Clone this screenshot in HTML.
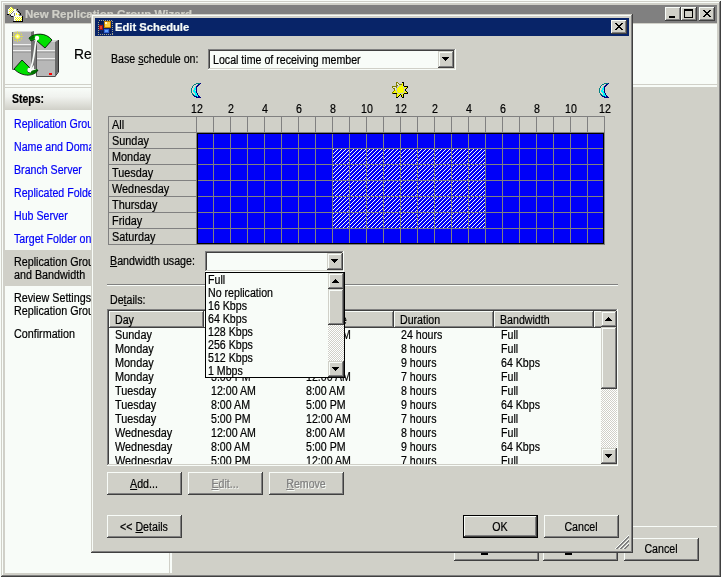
<!DOCTYPE html><html><head><meta charset="utf-8"><title>Edit Schedule</title><style>
html,body{margin:0;padding:0}body{width:721px;height:577px;position:relative;overflow:hidden;background:#F8FCF8;font-family:"Liberation Sans",sans-serif}
#r{position:absolute;left:0;top:0;width:721px;height:577px;overflow:hidden}
#r div,#r span.t,#r svg{position:absolute}
#r div{overflow:hidden}
span.t{white-space:nowrap;display:block;-webkit-text-stroke:0.22px currentColor}
u{text-decoration:underline;text-underline-offset:1px;text-decoration-thickness:1px}
</style></head><body><div id="r">
<div style="left:1px;top:1px;width:720px;height:576px;background:#D0D0C8;"></div>
<div style="left:1px;top:1px;width:720px;height:1px;background:#D0D0C8;"></div>
<div style="left:1px;top:1px;width:1px;height:576px;background:#D0D0C8;"></div>
<div style="left:1px;top:576px;width:720px;height:1px;background:#404040;"></div>
<div style="left:720px;top:1px;width:1px;height:576px;background:#404040;"></div>
<div style="left:2px;top:2px;width:718px;height:1px;background:#F8FCF8;"></div>
<div style="left:2px;top:2px;width:1px;height:574px;background:#F8FCF8;"></div>
<div style="left:2px;top:575px;width:718px;height:1px;background:#808080;"></div>
<div style="left:719px;top:2px;width:1px;height:574px;background:#808080;"></div>
<div style="left:5px;top:5px;width:712px;height:18px;background:#808080;"></div>
<span class="t" style="top:7.19px;font-size:11px;line-height:14px;color:#D0D0C8;transform:scaleX(1.044);font-weight:bold;left:25px;transform-origin:0 0;">New Replication Group Wizard</span>
<div style="left:665px;top:7px;width:16px;height:14px;background:#D0D0C8;"></div>
<div style="left:665px;top:7px;width:16px;height:1px;background:#F8FCF8;"></div>
<div style="left:665px;top:7px;width:1px;height:14px;background:#F8FCF8;"></div>
<div style="left:665px;top:20px;width:16px;height:1px;background:#404040;"></div>
<div style="left:680px;top:7px;width:1px;height:14px;background:#404040;"></div>
<div style="left:666px;top:8px;width:14px;height:1px;background:#D0D0C8;"></div>
<div style="left:666px;top:8px;width:1px;height:12px;background:#D0D0C8;"></div>
<div style="left:666px;top:19px;width:14px;height:1px;background:#808080;"></div>
<div style="left:679px;top:8px;width:1px;height:12px;background:#808080;"></div>
<div style="left:669px;top:16px;width:6px;height:2px;background:#000;"></div>
<div style="left:681px;top:7px;width:16px;height:14px;background:#D0D0C8;"></div>
<div style="left:681px;top:7px;width:16px;height:1px;background:#F8FCF8;"></div>
<div style="left:681px;top:7px;width:1px;height:14px;background:#F8FCF8;"></div>
<div style="left:681px;top:20px;width:16px;height:1px;background:#404040;"></div>
<div style="left:696px;top:7px;width:1px;height:14px;background:#404040;"></div>
<div style="left:682px;top:8px;width:14px;height:1px;background:#D0D0C8;"></div>
<div style="left:682px;top:8px;width:1px;height:12px;background:#D0D0C8;"></div>
<div style="left:682px;top:19px;width:14px;height:1px;background:#808080;"></div>
<div style="left:695px;top:8px;width:1px;height:12px;background:#808080;"></div>
<div style="left:684px;top:9px;width:9px;height:9px;background:#000;"></div>
<div style="left:685px;top:11px;width:7px;height:6px;background:#D0D0C8;"></div>
<div style="left:699px;top:7px;width:16px;height:14px;background:#D0D0C8;"></div>
<div style="left:699px;top:7px;width:16px;height:1px;background:#F8FCF8;"></div>
<div style="left:699px;top:7px;width:1px;height:14px;background:#F8FCF8;"></div>
<div style="left:699px;top:20px;width:16px;height:1px;background:#404040;"></div>
<div style="left:714px;top:7px;width:1px;height:14px;background:#404040;"></div>
<div style="left:700px;top:8px;width:14px;height:1px;background:#D0D0C8;"></div>
<div style="left:700px;top:8px;width:1px;height:12px;background:#D0D0C8;"></div>
<div style="left:700px;top:19px;width:14px;height:1px;background:#808080;"></div>
<div style="left:713px;top:8px;width:1px;height:12px;background:#808080;"></div>
<svg style="left:703px;top:10px" width="8" height="7" viewBox="0 0 8 7" shape-rendering="crispEdges"><path d="M0 0h2v1h-2zM6 0h2v1h-2zM1 1h2v1h-2zM5 1h2v1h-2zM2 2h4v1h-4zM3 3h2v1h-2zM2 4h4v1h-4zM1 5h2v1h-2zM5 5h2v1h-2zM0 6h2v1h-2zM6 6h2v1h-2z" fill="#000"/></svg>
<div style="left:5px;top:24px;width:712px;height:60px;background:#F8FCF8;"></div>
<div style="left:5px;top:84px;width:712px;height:1px;background:#D0D0C8;"></div>
<div style="left:5px;top:85px;width:712px;height:2px;background:#F8FCF8;"></div>
<div style="left:5px;top:87px;width:164px;height:1px;background:#D0D0C8;"></div>
<div style="left:5px;top:88px;width:164px;height:22px;background:linear-gradient(#F8FCF8,#F0F2EE 40%,#D0D0C8);"></div>
<div style="left:5px;top:110px;width:164px;height:463px;background:#F8FCF8;"></div>
<div style="left:169px;top:87px;width:1px;height:486px;background:#D0D0C8;"></div>
<div style="left:170px;top:87px;width:2px;height:486px;background:#F8FCF8;"></div>
<span class="t" style="top:43.98px;font-size:14.5px;line-height:20px;color:#000;transform:scaleX(0.95);left:74px;transform-origin:0 0;">Replication Group Schedule and Bandwidth</span>
<span class="t" style="top:91.67px;font-size:12.5px;line-height:14px;color:#000;transform:scaleX(0.84);font-weight:bold;left:12px;transform-origin:0 0;">Steps:</span>
<span class="t" style="top:116.67px;font-size:12.5px;line-height:14px;color:#0000F8;transform:scaleX(0.85);left:14px;transform-origin:0 0;">Replication Group Type</span>
<span class="t" style="top:139.67px;font-size:12.5px;line-height:14px;color:#0000F8;transform:scaleX(0.85);left:14px;transform-origin:0 0;">Name and Domain</span>
<span class="t" style="top:162.67px;font-size:12.5px;line-height:14px;color:#0000F8;transform:scaleX(0.85);left:14px;transform-origin:0 0;">Branch Server</span>
<span class="t" style="top:185.67px;font-size:12.5px;line-height:14px;color:#0000F8;transform:scaleX(0.85);left:14px;transform-origin:0 0;">Replicated Folders</span>
<span class="t" style="top:208.67px;font-size:12.5px;line-height:14px;color:#0000F8;transform:scaleX(0.85);left:14px;transform-origin:0 0;">Hub Server</span>
<span class="t" style="top:231.67px;font-size:12.5px;line-height:14px;color:#0000F8;transform:scaleX(0.85);left:14px;transform-origin:0 0;">Target Folder on Hub Server</span>
<div style="left:5px;top:250px;width:164px;height:36px;background:#D0D0C8;"></div>
<span class="t" style="top:254.67px;font-size:12.5px;line-height:14px;color:#000;transform:scaleX(0.86);left:14px;transform-origin:0 0;">Replication Group Schedule</span>
<span class="t" style="top:267.67px;font-size:12.5px;line-height:14px;color:#000;transform:scaleX(0.86);left:14px;transform-origin:0 0;">and Bandwidth</span>
<span class="t" style="top:290.67px;font-size:12.5px;line-height:14px;color:#000;transform:scaleX(0.86);left:14px;transform-origin:0 0;">Review Settings and Create</span>
<span class="t" style="top:303.67px;font-size:12.5px;line-height:14px;color:#000;transform:scaleX(0.86);left:14px;transform-origin:0 0;">Replication Group</span>
<span class="t" style="top:326.67px;font-size:12.5px;line-height:14px;color:#000;transform:scaleX(0.86);left:14px;transform-origin:0 0;">Confirmation</span>
<div style="left:172px;top:526px;width:545px;height:1px;background:#F8FCF8;"></div>
<div style="left:454px;top:538px;width:85px;height:23px;background:#D0D0C8;"></div>
<div style="left:454px;top:538px;width:85px;height:1px;background:#F8FCF8;"></div>
<div style="left:454px;top:538px;width:1px;height:23px;background:#F8FCF8;"></div>
<div style="left:454px;top:560px;width:85px;height:1px;background:#404040;"></div>
<div style="left:538px;top:538px;width:1px;height:23px;background:#404040;"></div>
<div style="left:455px;top:539px;width:83px;height:1px;background:#D0D0C8;"></div>
<div style="left:455px;top:539px;width:1px;height:21px;background:#D0D0C8;"></div>
<div style="left:455px;top:559px;width:83px;height:1px;background:#808080;"></div>
<div style="left:537px;top:539px;width:1px;height:21px;background:#808080;"></div>
<span class="t" style="top:540.67px;font-size:12.5px;line-height:14px;color:#000;transform:scaleX(0.85);left:395.5px;width:200px;text-align:center;transform-origin:50% 0;">&lt; Previous</span>
<div style="left:481px;top:553px;width:7px;height:2px;background:#000;"></div>
<div style="left:543px;top:538px;width:75px;height:23px;background:#D0D0C8;"></div>
<div style="left:543px;top:538px;width:75px;height:1px;background:#F8FCF8;"></div>
<div style="left:543px;top:538px;width:1px;height:23px;background:#F8FCF8;"></div>
<div style="left:543px;top:560px;width:75px;height:1px;background:#404040;"></div>
<div style="left:617px;top:538px;width:1px;height:23px;background:#404040;"></div>
<div style="left:544px;top:539px;width:73px;height:1px;background:#D0D0C8;"></div>
<div style="left:544px;top:539px;width:1px;height:21px;background:#D0D0C8;"></div>
<div style="left:544px;top:559px;width:73px;height:1px;background:#808080;"></div>
<div style="left:616px;top:539px;width:1px;height:21px;background:#808080;"></div>
<span class="t" style="top:540.67px;font-size:12.5px;line-height:14px;color:#000;transform:scaleX(0.85);left:479.5px;width:200px;text-align:center;transform-origin:50% 0;">Next &gt;</span>
<div style="left:565px;top:553px;width:7px;height:2px;background:#000;"></div>
<div style="left:624px;top:538px;width:75px;height:23px;background:#D0D0C8;"></div>
<div style="left:624px;top:538px;width:75px;height:1px;background:#F8FCF8;"></div>
<div style="left:624px;top:538px;width:1px;height:23px;background:#F8FCF8;"></div>
<div style="left:624px;top:560px;width:75px;height:1px;background:#404040;"></div>
<div style="left:698px;top:538px;width:1px;height:23px;background:#404040;"></div>
<div style="left:625px;top:539px;width:73px;height:1px;background:#D0D0C8;"></div>
<div style="left:625px;top:539px;width:1px;height:21px;background:#D0D0C8;"></div>
<div style="left:625px;top:559px;width:73px;height:1px;background:#808080;"></div>
<div style="left:697px;top:539px;width:1px;height:21px;background:#808080;"></div>
<span class="t" style="top:541.67px;font-size:12.5px;line-height:14px;color:#000;transform:scaleX(0.85);left:560.5px;width:200px;text-align:center;transform-origin:50% 0;">Cancel</span>
<svg style="left:0;top:0" width="721" height="577" viewBox="0 0 721 577"><g shape-rendering="crispEdges"><rect x="10" y="7" width="1" height="1" fill="#F8FCF8"/><rect x="11" y="7" width="1" height="1" fill="#F8FC00"/><rect x="9" y="8" width="1" height="1" fill="#F8FCF8"/><rect x="10" y="8" width="1" height="1" fill="#F8FC00"/><rect x="11" y="8" width="1" height="1" fill="#F8FCF8"/><rect x="12" y="8" width="1" height="1" fill="#F8FC00"/><rect x="8" y="9" width="1" height="1" fill="#F8FCF8"/><rect x="9" y="9" width="1" height="1" fill="#F8FC00"/><rect x="10" y="9" width="1" height="1" fill="#F8FCF8"/><rect x="11" y="9" width="1" height="1" fill="#F8FC00"/><rect x="12" y="9" width="1" height="1" fill="#F8FCF8"/><rect x="13" y="9" width="1" height="1" fill="#F8FC00"/><rect x="14" y="9" width="1" height="1" fill="#F8FCF8"/><rect x="15" y="9" width="1" height="1" fill="#F8FCF8"/><rect x="17" y="9" width="1" height="1" fill="#000"/><rect x="8" y="10" width="1" height="1" fill="#F8FCF8"/><rect x="9" y="10" width="1" height="1" fill="#F8FCF8"/><rect x="10" y="10" width="1" height="1" fill="#F8FC00"/><rect x="11" y="10" width="1" height="1" fill="#F8FCF8"/><rect x="12" y="10" width="1" height="1" fill="#F8FC00"/><rect x="13" y="10" width="1" height="1" fill="#F8FCF8"/><rect x="14" y="10" width="1" height="1" fill="#F8FCF8"/><rect x="15" y="10" width="1" height="1" fill="#F8FCF8"/><rect x="8" y="11" width="1" height="1" fill="#F8FCF8"/><rect x="9" y="11" width="1" height="1" fill="#F8FC00"/><rect x="10" y="11" width="1" height="1" fill="#F8FCF8"/><rect x="11" y="11" width="1" height="1" fill="#F8FC00"/><rect x="12" y="11" width="1" height="1" fill="#F8FCF8"/><rect x="14" y="11" width="1" height="1" fill="#F8FCF8"/><rect x="15" y="11" width="1" height="1" fill="#F8FCF8"/><rect x="16" y="11" width="1" height="1" fill="#F8FCF8"/><rect x="18" y="11" width="1" height="1" fill="#000"/><rect x="8" y="12" width="1" height="1" fill="#F8FCF8"/><rect x="9" y="12" width="1" height="1" fill="#F8FCF8"/><rect x="10" y="12" width="1" height="1" fill="#F8FC00"/><rect x="11" y="12" width="1" height="1" fill="#F8FCF8"/><rect x="13" y="12" width="1" height="1" fill="#F8FCF8"/><rect x="14" y="12" width="1" height="1" fill="#F8FCF8"/><rect x="15" y="12" width="1" height="1" fill="#F8FCF8"/><rect x="16" y="12" width="1" height="1" fill="#F8FCF8"/><rect x="17" y="12" width="1" height="1" fill="#F8FCF8"/><rect x="19" y="12" width="1" height="1" fill="#000"/><rect x="8" y="13" width="1" height="1" fill="#F8FCF8"/><rect x="9" y="13" width="1" height="1" fill="#F8FC00"/><rect x="10" y="13" width="1" height="1" fill="#F8FCF8"/><rect x="12" y="13" width="1" height="1" fill="#F8FCF8"/><rect x="13" y="13" width="1" height="1" fill="#F8FCF8"/><rect x="15" y="13" width="1" height="1" fill="#F8FCF8"/><rect x="16" y="13" width="1" height="1" fill="#F8FC00"/><rect x="17" y="13" width="1" height="1" fill="#F8FCF8"/><rect x="18" y="13" width="1" height="1" fill="#F8FCF8"/><rect x="20" y="13" width="1" height="1" fill="#000"/><rect x="7" y="14" width="1" height="1" fill="#000"/><rect x="8" y="14" width="1" height="1" fill="#000"/><rect x="11" y="14" width="1" height="1" fill="#F8FCF8"/><rect x="12" y="14" width="1" height="1" fill="#F8FCF8"/><rect x="13" y="14" width="1" height="1" fill="#F8FCF8"/><rect x="15" y="14" width="1" height="1" fill="#F8FCF8"/><rect x="16" y="14" width="1" height="1" fill="#F8FC00"/><rect x="17" y="14" width="1" height="1" fill="#F8FCF8"/><rect x="18" y="14" width="1" height="1" fill="#F8FC00"/><rect x="20" y="14" width="1" height="1" fill="#000"/><rect x="10" y="15" width="1" height="1" fill="#000"/><rect x="11" y="15" width="1" height="1" fill="#F8FCF8"/><rect x="12" y="15" width="1" height="1" fill="#F8FCF8"/><rect x="13" y="15" width="1" height="1" fill="#F8FCF8"/><rect x="15" y="15" width="1" height="1" fill="#F8FCF8"/><rect x="16" y="15" width="1" height="1" fill="#F8FCF8"/><rect x="17" y="15" width="1" height="1" fill="#F8FCF8"/><rect x="18" y="15" width="1" height="1" fill="#F8FCF8"/><rect x="11" y="16" width="1" height="1" fill="#000"/><rect x="12" y="16" width="1" height="1" fill="#000"/><rect x="14" y="16" width="1" height="1" fill="#F8FCF8"/><rect x="15" y="16" width="1" height="1" fill="#F8FCF8"/><rect x="16" y="16" width="1" height="1" fill="#F8FCF8"/><rect x="17" y="16" width="1" height="1" fill="#F8FCF8"/><rect x="18" y="16" width="1" height="1" fill="#F8FCF8"/><rect x="19" y="16" width="1" height="1" fill="#F8FCF8"/><rect x="20" y="16" width="1" height="1" fill="#F8FCF8"/><rect x="21" y="16" width="1" height="1" fill="#F8FCF8"/><rect x="22" y="16" width="1" height="1" fill="#000"/><rect x="14" y="17" width="1" height="1" fill="#F8FCF8"/><rect x="15" y="17" width="1" height="1" fill="#F8FC00"/><rect x="16" y="17" width="1" height="1" fill="#F8FCF8"/><rect x="17" y="17" width="1" height="1" fill="#F8FC00"/><rect x="18" y="17" width="1" height="1" fill="#F8FCF8"/><rect x="19" y="17" width="1" height="1" fill="#F8FC00"/><rect x="20" y="17" width="1" height="1" fill="#F8FCF8"/><rect x="21" y="17" width="1" height="1" fill="#F8FC00"/><rect x="22" y="17" width="1" height="1" fill="#000"/><rect x="14" y="18" width="1" height="1" fill="#F8FCF8"/><rect x="15" y="18" width="1" height="1" fill="#F8FCF8"/><rect x="16" y="18" width="1" height="1" fill="#F8FC00"/><rect x="17" y="18" width="1" height="1" fill="#F8FCF8"/><rect x="18" y="18" width="1" height="1" fill="#F8FC00"/><rect x="19" y="18" width="1" height="1" fill="#F8FCF8"/><rect x="20" y="18" width="1" height="1" fill="#F8FC00"/><rect x="21" y="18" width="1" height="1" fill="#F8FCF8"/><rect x="22" y="18" width="1" height="1" fill="#000"/><rect x="14" y="19" width="1" height="1" fill="#F8FCF8"/><rect x="15" y="19" width="1" height="1" fill="#F8FC00"/><rect x="16" y="19" width="1" height="1" fill="#F8FCF8"/><rect x="17" y="19" width="1" height="1" fill="#F8FC00"/><rect x="18" y="19" width="1" height="1" fill="#F8FCF8"/><rect x="19" y="19" width="1" height="1" fill="#F8FC00"/><rect x="20" y="19" width="1" height="1" fill="#F8FCF8"/><rect x="21" y="19" width="1" height="1" fill="#F8FC00"/><rect x="22" y="19" width="1" height="1" fill="#000"/><rect x="14" y="20" width="1" height="1" fill="#F8FCF8"/><rect x="15" y="20" width="1" height="1" fill="#F8FCF8"/><rect x="16" y="20" width="1" height="1" fill="#F8FC00"/><rect x="17" y="20" width="1" height="1" fill="#F8FCF8"/><rect x="18" y="20" width="1" height="1" fill="#F8FC00"/><rect x="19" y="20" width="1" height="1" fill="#F8FCF8"/><rect x="20" y="20" width="1" height="1" fill="#F8FC00"/><rect x="21" y="20" width="1" height="1" fill="#F8FCF8"/><rect x="22" y="20" width="1" height="1" fill="#000"/><rect x="13" y="21" width="1" height="1" fill="#000"/><rect x="14" y="21" width="1" height="1" fill="#000"/><rect x="15" y="21" width="1" height="1" fill="#000"/><rect x="16" y="21" width="1" height="1" fill="#000"/><rect x="17" y="21" width="1" height="1" fill="#000"/><rect x="18" y="21" width="1" height="1" fill="#000"/><rect x="19" y="21" width="1" height="1" fill="#000"/><rect x="20" y="21" width="1" height="1" fill="#000"/><rect x="21" y="21" width="1" height="1" fill="#000"/><rect x="22" y="21" width="1" height="1" fill="#000"/></g><path d="M13 32h18v37h-18z" fill="#B4B4B4"/><path d="M13 32l3-1h18l-3 1z" fill="#D8D8D8"/><path d="M31 32l3-1v34l-3 4z" fill="#707070"/><path d="M34 41h3v28h-3z" fill="#787878"/><path d="M13 44h18v1.5h-18z" fill="#F0F0F0"/><path d="M13 50h18v1.5h-18z" fill="#F0F0F0"/><path d="M13 45.5h18v1h-18zM13 51.5h18v1h-18z" fill="#909090"/><path d="M37 42h18v34h-18z" fill="#B8B8B8"/><path d="M37 42l3-2h18l-3 2z" fill="#D8D8D8"/><path d="M55 42l3-2v32l-3 4z" fill="#686868"/><path d="M37 50h18v1.5h-18z" fill="#F0F0F0"/><path d="M37 58h18v1.5h-18z" fill="#F0F0F0"/><path d="M37 51.5h18v1h-18zM37 59.5h18v1h-18z" fill="#909090"/><path d="M36.5 42v34.5h19" stroke="#505050" stroke-width="1" fill="none"/><rect x="49" y="73" width="3" height="2" fill="#FF0000"/><path d="M12.500 32v37.500h6" stroke="#606060" stroke-width="1" fill="none"/><path d="M55 76.500l3.500-4.500v-32" stroke="#303030" stroke-width="1" fill="none"/><path d="M29 38c5-5 17-6 23 2l-7 8-8-7c-2-2-4-1-6 0z" fill="#00E000" stroke="#000" stroke-width=".8"/><path d="M28.5 38.5l5-3.5 1.500 2.500-3 2.500z" fill="#007000"/><path d="M14 69l8-9 8 8c-2 1-3 2-2 4 3 2 6 1 10-2-3 6-15 8-24-1z" fill="#00E000" stroke="#000" stroke-width=".8"/><path d="M31 71l6-2 1 1-4 4-3-1z" fill="#007000"/><path d="M37 38C34 46 35 60 30 70" stroke="#F8FCF8" stroke-width="1.7" fill="none" stroke-linecap="round"/><circle cx="37" cy="38" r="2.2" fill="#fff"/><circle cx="29.5" cy="70" r="2.2" fill="#fff"/><line x1="19.5" y1="36.5" x2="23.0" y2="36.5" stroke="#FFFF00" stroke-width="1" stroke-dasharray="1 1"/><line x1="19.2" y1="37.5" x2="22.3" y2="39.2" stroke="#FFFF00" stroke-width="1" stroke-dasharray="1 1"/><line x1="18.5" y1="38.2" x2="20.2" y2="41.3" stroke="#FFFF00" stroke-width="1" stroke-dasharray="1 1"/><line x1="17.5" y1="38.5" x2="17.5" y2="42.0" stroke="#FFFF00" stroke-width="1" stroke-dasharray="1 1"/><line x1="16.5" y1="38.2" x2="14.8" y2="41.3" stroke="#FFFF00" stroke-width="1" stroke-dasharray="1 1"/><line x1="15.8" y1="37.5" x2="12.7" y2="39.2" stroke="#FFFF00" stroke-width="1" stroke-dasharray="1 1"/><line x1="15.5" y1="36.5" x2="12.0" y2="36.5" stroke="#FFFF00" stroke-width="1" stroke-dasharray="1 1"/><line x1="15.8" y1="35.5" x2="12.7" y2="33.8" stroke="#FFFF00" stroke-width="1" stroke-dasharray="1 1"/><line x1="16.5" y1="34.8" x2="14.7" y2="31.7" stroke="#FFFF00" stroke-width="1" stroke-dasharray="1 1"/><line x1="17.5" y1="34.5" x2="17.5" y2="31.0" stroke="#FFFF00" stroke-width="1" stroke-dasharray="1 1"/><line x1="18.5" y1="34.8" x2="20.2" y2="31.7" stroke="#FFFF00" stroke-width="1" stroke-dasharray="1 1"/><line x1="19.2" y1="35.5" x2="22.3" y2="33.8" stroke="#FFFF00" stroke-width="1" stroke-dasharray="1 1"/><circle cx="17.5" cy="36.500" r="2.2" fill="#FFFF60"/><circle cx="17.5" cy="36.500" r="1" fill="#fff"/></svg>
<div style="left:91px;top:14px;width:542px;height:539px;background:#D0D0C8;"></div>
<div style="left:91px;top:14px;width:542px;height:1px;background:#D0D0C8;"></div>
<div style="left:91px;top:14px;width:1px;height:539px;background:#D0D0C8;"></div>
<div style="left:91px;top:552px;width:542px;height:1px;background:#404040;"></div>
<div style="left:632px;top:14px;width:1px;height:539px;background:#404040;"></div>
<div style="left:92px;top:15px;width:540px;height:1px;background:#F8FCF8;"></div>
<div style="left:92px;top:15px;width:1px;height:537px;background:#F8FCF8;"></div>
<div style="left:92px;top:551px;width:540px;height:1px;background:#808080;"></div>
<div style="left:631px;top:15px;width:1px;height:537px;background:#808080;"></div>
<div style="left:95px;top:18px;width:534px;height:18px;background:#082468;"></div>
<span class="t" style="top:20.19px;font-size:11px;line-height:14px;color:#F8FCF8;transform:scaleX(1.02);font-weight:bold;left:115px;transform-origin:0 0;">Edit Schedule</span>
<div style="left:611px;top:20px;width:16px;height:14px;background:#D0D0C8;"></div>
<div style="left:611px;top:20px;width:16px;height:1px;background:#F8FCF8;"></div>
<div style="left:611px;top:20px;width:1px;height:14px;background:#F8FCF8;"></div>
<div style="left:611px;top:33px;width:16px;height:1px;background:#404040;"></div>
<div style="left:626px;top:20px;width:1px;height:14px;background:#404040;"></div>
<div style="left:612px;top:21px;width:14px;height:1px;background:#D0D0C8;"></div>
<div style="left:612px;top:21px;width:1px;height:12px;background:#D0D0C8;"></div>
<div style="left:612px;top:32px;width:14px;height:1px;background:#808080;"></div>
<div style="left:625px;top:21px;width:1px;height:12px;background:#808080;"></div>
<svg style="left:615px;top:23px" width="8" height="7" viewBox="0 0 8 7" shape-rendering="crispEdges"><path d="M0 0h2v1h-2zM6 0h2v1h-2zM1 1h2v1h-2zM5 1h2v1h-2zM2 2h4v1h-4zM3 3h2v1h-2zM2 4h4v1h-4zM1 5h2v1h-2zM5 5h2v1h-2zM0 6h2v1h-2zM6 6h2v1h-2z" fill="#000"/></svg>
<span class="t" style="top:51.67px;font-size:12.5px;line-height:14px;color:#000;transform:scaleX(0.85);left:111px;transform-origin:0 0;">Base <u>s</u>chedule on:</span>
<div style="left:208px;top:49px;width:248px;height:21px;background:#F8FCF8;"></div>
<div style="left:208px;top:49px;width:248px;height:1px;background:#808080;"></div>
<div style="left:208px;top:49px;width:1px;height:21px;background:#808080;"></div>
<div style="left:208px;top:69px;width:248px;height:1px;background:#F8FCF8;"></div>
<div style="left:455px;top:49px;width:1px;height:21px;background:#F8FCF8;"></div>
<div style="left:209px;top:50px;width:246px;height:1px;background:#404040;"></div>
<div style="left:209px;top:50px;width:1px;height:19px;background:#404040;"></div>
<div style="left:209px;top:68px;width:246px;height:1px;background:#D0D0C8;"></div>
<div style="left:454px;top:50px;width:1px;height:19px;background:#D0D0C8;"></div>
<span class="t" style="top:52.67px;font-size:12.5px;line-height:14px;color:#000;transform:scaleX(0.85);left:213px;transform-origin:0 0;">Local time of receiving member</span>
<div style="left:438px;top:51px;width:16px;height:17px;background:#D0D0C8;"></div>
<div style="left:438px;top:51px;width:16px;height:1px;background:#D0D0C8;"></div>
<div style="left:438px;top:51px;width:1px;height:17px;background:#D0D0C8;"></div>
<div style="left:438px;top:67px;width:16px;height:1px;background:#404040;"></div>
<div style="left:453px;top:51px;width:1px;height:17px;background:#404040;"></div>
<div style="left:439px;top:52px;width:14px;height:1px;background:#F8FCF8;"></div>
<div style="left:439px;top:52px;width:1px;height:15px;background:#F8FCF8;"></div>
<div style="left:439px;top:66px;width:14px;height:1px;background:#808080;"></div>
<div style="left:452px;top:52px;width:1px;height:15px;background:#808080;"></div>
<div style="left:442px;top:57px;width:7px;height:1px;background:#000;"></div>
<div style="left:443px;top:58px;width:5px;height:1px;background:#000;"></div>
<div style="left:444px;top:59px;width:3px;height:1px;background:#000;"></div>
<div style="left:445px;top:60px;width:1px;height:1px;background:#000;"></div>
<span class="t" style="top:101.67px;font-size:12.5px;line-height:14px;color:#000;transform:scaleX(0.85);left:96.5px;width:200px;text-align:center;transform-origin:50% 0;">12</span>
<span class="t" style="top:101.67px;font-size:12.5px;line-height:14px;color:#000;transform:scaleX(0.85);left:130.5px;width:200px;text-align:center;transform-origin:50% 0;">2</span>
<span class="t" style="top:101.67px;font-size:12.5px;line-height:14px;color:#000;transform:scaleX(0.85);left:164.5px;width:200px;text-align:center;transform-origin:50% 0;">4</span>
<span class="t" style="top:101.67px;font-size:12.5px;line-height:14px;color:#000;transform:scaleX(0.85);left:198.5px;width:200px;text-align:center;transform-origin:50% 0;">6</span>
<span class="t" style="top:101.67px;font-size:12.5px;line-height:14px;color:#000;transform:scaleX(0.85);left:232.5px;width:200px;text-align:center;transform-origin:50% 0;">8</span>
<span class="t" style="top:101.67px;font-size:12.5px;line-height:14px;color:#000;transform:scaleX(0.85);left:266.5px;width:200px;text-align:center;transform-origin:50% 0;">10</span>
<span class="t" style="top:101.67px;font-size:12.5px;line-height:14px;color:#000;transform:scaleX(0.85);left:300.5px;width:200px;text-align:center;transform-origin:50% 0;">12</span>
<span class="t" style="top:101.67px;font-size:12.5px;line-height:14px;color:#000;transform:scaleX(0.85);left:334.5px;width:200px;text-align:center;transform-origin:50% 0;">2</span>
<span class="t" style="top:101.67px;font-size:12.5px;line-height:14px;color:#000;transform:scaleX(0.85);left:368.5px;width:200px;text-align:center;transform-origin:50% 0;">4</span>
<span class="t" style="top:101.67px;font-size:12.5px;line-height:14px;color:#000;transform:scaleX(0.85);left:402.5px;width:200px;text-align:center;transform-origin:50% 0;">6</span>
<span class="t" style="top:101.67px;font-size:12.5px;line-height:14px;color:#000;transform:scaleX(0.85);left:436.5px;width:200px;text-align:center;transform-origin:50% 0;">8</span>
<span class="t" style="top:101.67px;font-size:12.5px;line-height:14px;color:#000;transform:scaleX(0.85);left:470.5px;width:200px;text-align:center;transform-origin:50% 0;">10</span>
<span class="t" style="top:101.67px;font-size:12.5px;line-height:14px;color:#000;transform:scaleX(0.85);left:504.5px;width:200px;text-align:center;transform-origin:50% 0;">12</span>
<div style="left:108px;top:116px;width:497px;height:129px;background:#D0D0C8;"></div>
<div style="left:197px;top:133px;width:407px;height:111px;background:#0000F8;"></div>
<svg style="left:332px;top:148px" width="153" height="80" shape-rendering="crispEdges"><defs><pattern id="h" width="4" height="4" patternUnits="userSpaceOnUse"><rect width="4" height="4" fill="#0000F8"/><rect x="2" y="0" width="1" height="1" fill="#F8FCF8"/><rect x="1" y="1" width="1" height="1" fill="#F8FCF8"/><rect x="0" y="2" width="1" height="1" fill="#F8FCF8"/><rect x="3" y="3" width="1" height="1" fill="#F8FCF8"/></pattern></defs><rect width="153" height="80" fill="url(#h)"/></svg>
<div style="left:108px;top:116px;width:497px;height:1px;background:#808080;"></div>
<div style="left:108px;top:132px;width:497px;height:1px;background:#808080;"></div>
<div style="left:108px;top:148px;width:497px;height:1px;background:#808080;"></div>
<div style="left:108px;top:164px;width:497px;height:1px;background:#808080;"></div>
<div style="left:108px;top:180px;width:497px;height:1px;background:#808080;"></div>
<div style="left:108px;top:196px;width:497px;height:1px;background:#808080;"></div>
<div style="left:108px;top:212px;width:497px;height:1px;background:#808080;"></div>
<div style="left:108px;top:228px;width:497px;height:1px;background:#808080;"></div>
<div style="left:108px;top:244px;width:497px;height:1px;background:#808080;"></div>
<div style="left:108px;top:116px;width:1px;height:129px;background:#808080;"></div>
<div style="left:196px;top:116px;width:1px;height:129px;background:#808080;"></div>
<div style="left:213px;top:116px;width:1px;height:129px;background:#808080;"></div>
<div style="left:230px;top:116px;width:1px;height:129px;background:#808080;"></div>
<div style="left:247px;top:116px;width:1px;height:129px;background:#808080;"></div>
<div style="left:264px;top:116px;width:1px;height:129px;background:#808080;"></div>
<div style="left:281px;top:116px;width:1px;height:129px;background:#808080;"></div>
<div style="left:298px;top:116px;width:1px;height:129px;background:#808080;"></div>
<div style="left:315px;top:116px;width:1px;height:129px;background:#808080;"></div>
<div style="left:332px;top:116px;width:1px;height:129px;background:#808080;"></div>
<div style="left:349px;top:116px;width:1px;height:129px;background:#808080;"></div>
<div style="left:366px;top:116px;width:1px;height:129px;background:#808080;"></div>
<div style="left:383px;top:116px;width:1px;height:129px;background:#808080;"></div>
<div style="left:400px;top:116px;width:1px;height:129px;background:#808080;"></div>
<div style="left:417px;top:116px;width:1px;height:129px;background:#808080;"></div>
<div style="left:434px;top:116px;width:1px;height:129px;background:#808080;"></div>
<div style="left:451px;top:116px;width:1px;height:129px;background:#808080;"></div>
<div style="left:468px;top:116px;width:1px;height:129px;background:#808080;"></div>
<div style="left:485px;top:116px;width:1px;height:129px;background:#808080;"></div>
<div style="left:502px;top:116px;width:1px;height:129px;background:#808080;"></div>
<div style="left:519px;top:116px;width:1px;height:129px;background:#808080;"></div>
<div style="left:536px;top:116px;width:1px;height:129px;background:#808080;"></div>
<div style="left:553px;top:116px;width:1px;height:129px;background:#808080;"></div>
<div style="left:570px;top:116px;width:1px;height:129px;background:#808080;"></div>
<div style="left:587px;top:116px;width:1px;height:129px;background:#808080;"></div>
<div style="left:604px;top:116px;width:1px;height:129px;background:#808080;"></div>
<div style="left:197px;top:133px;width:407px;height:1px;background:#000;"></div>
<div style="left:197px;top:133px;width:1px;height:111px;background:#000;"></div>
<div style="left:603px;top:133px;width:1px;height:111px;background:#000;"></div>
<div style="left:197px;top:243px;width:407px;height:1px;background:#000;"></div>
<span class="t" style="top:117.67px;font-size:12.5px;line-height:14px;color:#000;transform:scaleX(0.87);left:112px;transform-origin:0 0;">All</span>
<span class="t" style="top:133.67px;font-size:12.5px;line-height:14px;color:#000;transform:scaleX(0.87);left:112px;transform-origin:0 0;">Sunday</span>
<span class="t" style="top:149.67px;font-size:12.5px;line-height:14px;color:#000;transform:scaleX(0.87);left:112px;transform-origin:0 0;">Monday</span>
<span class="t" style="top:165.67px;font-size:12.5px;line-height:14px;color:#000;transform:scaleX(0.87);left:112px;transform-origin:0 0;">Tuesday</span>
<span class="t" style="top:181.67px;font-size:12.5px;line-height:14px;color:#000;transform:scaleX(0.87);left:112px;transform-origin:0 0;">Wednesday</span>
<span class="t" style="top:197.67px;font-size:12.5px;line-height:14px;color:#000;transform:scaleX(0.87);left:112px;transform-origin:0 0;">Thursday</span>
<span class="t" style="top:213.67px;font-size:12.5px;line-height:14px;color:#000;transform:scaleX(0.87);left:112px;transform-origin:0 0;">Friday</span>
<span class="t" style="top:229.67px;font-size:12.5px;line-height:14px;color:#000;transform:scaleX(0.87);left:112px;transform-origin:0 0;">Saturday</span>
<span class="t" style="top:253.67px;font-size:12.5px;line-height:14px;color:#000;transform:scaleX(0.855);left:110px;transform-origin:0 0;"><u>B</u>andwidth usage:</span>
<div style="left:205px;top:251px;width:139px;height:21px;background:#F8FCF8;"></div>
<div style="left:205px;top:251px;width:139px;height:1px;background:#808080;"></div>
<div style="left:205px;top:251px;width:1px;height:21px;background:#808080;"></div>
<div style="left:205px;top:271px;width:139px;height:1px;background:#F8FCF8;"></div>
<div style="left:343px;top:251px;width:1px;height:21px;background:#F8FCF8;"></div>
<div style="left:206px;top:252px;width:137px;height:1px;background:#404040;"></div>
<div style="left:206px;top:252px;width:1px;height:19px;background:#404040;"></div>
<div style="left:206px;top:270px;width:137px;height:1px;background:#D0D0C8;"></div>
<div style="left:342px;top:252px;width:1px;height:19px;background:#D0D0C8;"></div>
<div style="left:327px;top:253px;width:16px;height:17px;background:#D0D0C8;"></div>
<div style="left:327px;top:253px;width:16px;height:1px;background:#D0D0C8;"></div>
<div style="left:327px;top:253px;width:1px;height:17px;background:#D0D0C8;"></div>
<div style="left:327px;top:269px;width:16px;height:1px;background:#404040;"></div>
<div style="left:342px;top:253px;width:1px;height:17px;background:#404040;"></div>
<div style="left:328px;top:254px;width:14px;height:1px;background:#F8FCF8;"></div>
<div style="left:328px;top:254px;width:1px;height:15px;background:#F8FCF8;"></div>
<div style="left:328px;top:268px;width:14px;height:1px;background:#808080;"></div>
<div style="left:341px;top:254px;width:1px;height:15px;background:#808080;"></div>
<div style="left:331px;top:259px;width:7px;height:1px;background:#000;"></div>
<div style="left:332px;top:260px;width:5px;height:1px;background:#000;"></div>
<div style="left:333px;top:261px;width:3px;height:1px;background:#000;"></div>
<div style="left:334px;top:262px;width:1px;height:1px;background:#000;"></div>
<div style="left:107px;top:284px;width:511px;height:1px;background:#808080;"></div>
<div style="left:107px;top:285px;width:511px;height:1px;background:#F8FCF8;"></div>
<span class="t" style="top:292.67px;font-size:12.5px;line-height:14px;color:#000;transform:scaleX(0.85);left:110px;transform-origin:0 0;">De<u>t</u>ails:</span>
<div style="left:107px;top:309px;width:511px;height:157px;background:#F8FCF8;"></div>
<div style="left:107px;top:309px;width:511px;height:1px;background:#808080;"></div>
<div style="left:107px;top:309px;width:1px;height:157px;background:#808080;"></div>
<div style="left:107px;top:465px;width:511px;height:1px;background:#F8FCF8;"></div>
<div style="left:617px;top:309px;width:1px;height:157px;background:#F8FCF8;"></div>
<div style="left:108px;top:310px;width:509px;height:1px;background:#404040;"></div>
<div style="left:108px;top:310px;width:1px;height:155px;background:#404040;"></div>
<div style="left:108px;top:464px;width:509px;height:1px;background:#D0D0C8;"></div>
<div style="left:616px;top:310px;width:1px;height:155px;background:#D0D0C8;"></div>
<div style="left:109px;top:311px;width:95px;height:17px;background:#D0D0C8;"></div>
<div style="left:109px;top:311px;width:95px;height:1px;background:#F8FCF8;"></div>
<div style="left:109px;top:311px;width:1px;height:17px;background:#F8FCF8;"></div>
<div style="left:109px;top:327px;width:95px;height:1px;background:#404040;"></div>
<div style="left:203px;top:311px;width:1px;height:17px;background:#404040;"></div>
<div style="left:110px;top:326px;width:93px;height:1px;background:#808080;"></div>
<div style="left:202px;top:312px;width:1px;height:15px;background:#808080;"></div>
<span class="t" style="top:312.67px;font-size:12.5px;line-height:14px;color:#000;transform:scaleX(0.85);left:114.5px;transform-origin:0 0;">Day</span>
<div style="left:204px;top:311px;width:95px;height:17px;background:#D0D0C8;"></div>
<div style="left:204px;top:311px;width:95px;height:1px;background:#F8FCF8;"></div>
<div style="left:204px;top:311px;width:1px;height:17px;background:#F8FCF8;"></div>
<div style="left:204px;top:327px;width:95px;height:1px;background:#404040;"></div>
<div style="left:298px;top:311px;width:1px;height:17px;background:#404040;"></div>
<div style="left:205px;top:326px;width:93px;height:1px;background:#808080;"></div>
<div style="left:297px;top:312px;width:1px;height:15px;background:#808080;"></div>
<span class="t" style="top:312.67px;font-size:12.5px;line-height:14px;color:#000;transform:scaleX(0.85);left:209.5px;transform-origin:0 0;">Start Time</span>
<div style="left:299px;top:311px;width:95px;height:17px;background:#D0D0C8;"></div>
<div style="left:299px;top:311px;width:95px;height:1px;background:#F8FCF8;"></div>
<div style="left:299px;top:311px;width:1px;height:17px;background:#F8FCF8;"></div>
<div style="left:299px;top:327px;width:95px;height:1px;background:#404040;"></div>
<div style="left:393px;top:311px;width:1px;height:17px;background:#404040;"></div>
<div style="left:300px;top:326px;width:93px;height:1px;background:#808080;"></div>
<div style="left:392px;top:312px;width:1px;height:15px;background:#808080;"></div>
<span class="t" style="top:312.67px;font-size:12.5px;line-height:14px;color:#000;transform:scaleX(0.79);left:304.5px;transform-origin:0 0;">End Time</span>
<div style="left:394px;top:311px;width:100px;height:17px;background:#D0D0C8;"></div>
<div style="left:394px;top:311px;width:100px;height:1px;background:#F8FCF8;"></div>
<div style="left:394px;top:311px;width:1px;height:17px;background:#F8FCF8;"></div>
<div style="left:394px;top:327px;width:100px;height:1px;background:#404040;"></div>
<div style="left:493px;top:311px;width:1px;height:17px;background:#404040;"></div>
<div style="left:395px;top:326px;width:98px;height:1px;background:#808080;"></div>
<div style="left:492px;top:312px;width:1px;height:15px;background:#808080;"></div>
<span class="t" style="top:312.67px;font-size:12.5px;line-height:14px;color:#000;transform:scaleX(0.85);left:399.5px;transform-origin:0 0;">Duration</span>
<div style="left:494px;top:311px;width:100px;height:17px;background:#D0D0C8;"></div>
<div style="left:494px;top:311px;width:100px;height:1px;background:#F8FCF8;"></div>
<div style="left:494px;top:311px;width:1px;height:17px;background:#F8FCF8;"></div>
<div style="left:494px;top:327px;width:100px;height:1px;background:#404040;"></div>
<div style="left:593px;top:311px;width:1px;height:17px;background:#404040;"></div>
<div style="left:495px;top:326px;width:98px;height:1px;background:#808080;"></div>
<div style="left:592px;top:312px;width:1px;height:15px;background:#808080;"></div>
<span class="t" style="top:312.67px;font-size:12.5px;line-height:14px;color:#000;transform:scaleX(0.85);left:499.5px;transform-origin:0 0;">Bandwidth</span>
<div style="left:594px;top:311px;width:23px;height:17px;background:#D0D0C8;"></div>
<div style="left:594px;top:311px;width:23px;height:1px;background:#F8FCF8;"></div>
<div style="left:594px;top:311px;width:1px;height:17px;background:#F8FCF8;"></div>
<div style="left:594px;top:327px;width:23px;height:1px;background:#404040;"></div>
<div style="left:616px;top:311px;width:1px;height:17px;background:#404040;"></div>
<div style="left:595px;top:326px;width:21px;height:1px;background:#808080;"></div>
<div style="left:615px;top:312px;width:1px;height:15px;background:#808080;"></div>
<div style="left:109px;top:328px;width:492px;height:136px;">
<span class="t" style="top:-0.33px;font-size:12.5px;line-height:14px;color:#000;transform:scaleX(0.87);left:6px;transform-origin:0 0;">Sunday</span>
<span class="t" style="top:-0.33px;font-size:12.5px;line-height:14px;color:#000;transform:scaleX(0.85);left:101.5px;transform-origin:0 0;">12:00 AM</span>
<span class="t" style="top:-0.33px;font-size:12.5px;line-height:14px;color:#000;transform:scaleX(0.85);left:196.5px;transform-origin:0 0;">12:00 AM</span>
<span class="t" style="top:-0.33px;font-size:12.5px;line-height:14px;color:#000;transform:scaleX(0.85);left:292px;transform-origin:0 0;">24 hours</span>
<span class="t" style="top:-0.33px;font-size:12.5px;line-height:14px;color:#000;transform:scaleX(0.85);left:392px;transform-origin:0 0;">Full</span>
<span class="t" style="top:13.67px;font-size:12.5px;line-height:14px;color:#000;transform:scaleX(0.87);left:6px;transform-origin:0 0;">Monday</span>
<span class="t" style="top:13.67px;font-size:12.5px;line-height:14px;color:#000;transform:scaleX(0.85);left:101.5px;transform-origin:0 0;">12:00 AM</span>
<span class="t" style="top:13.67px;font-size:12.5px;line-height:14px;color:#000;transform:scaleX(0.85);left:196.5px;transform-origin:0 0;">8:00 AM</span>
<span class="t" style="top:13.67px;font-size:12.5px;line-height:14px;color:#000;transform:scaleX(0.85);left:292px;transform-origin:0 0;">8 hours</span>
<span class="t" style="top:13.67px;font-size:12.5px;line-height:14px;color:#000;transform:scaleX(0.85);left:392px;transform-origin:0 0;">Full</span>
<span class="t" style="top:27.67px;font-size:12.5px;line-height:14px;color:#000;transform:scaleX(0.87);left:6px;transform-origin:0 0;">Monday</span>
<span class="t" style="top:27.67px;font-size:12.5px;line-height:14px;color:#000;transform:scaleX(0.85);left:101.5px;transform-origin:0 0;">8:00 AM</span>
<span class="t" style="top:27.67px;font-size:12.5px;line-height:14px;color:#000;transform:scaleX(0.85);left:196.5px;transform-origin:0 0;">5:00 PM</span>
<span class="t" style="top:27.67px;font-size:12.5px;line-height:14px;color:#000;transform:scaleX(0.85);left:292px;transform-origin:0 0;">9 hours</span>
<span class="t" style="top:27.67px;font-size:12.5px;line-height:14px;color:#000;transform:scaleX(0.85);left:392px;transform-origin:0 0;">64 Kbps</span>
<span class="t" style="top:41.67px;font-size:12.5px;line-height:14px;color:#000;transform:scaleX(0.87);left:6px;transform-origin:0 0;">Monday</span>
<span class="t" style="top:41.67px;font-size:12.5px;line-height:14px;color:#000;transform:scaleX(0.85);left:101.5px;transform-origin:0 0;">5:00 PM</span>
<span class="t" style="top:41.67px;font-size:12.5px;line-height:14px;color:#000;transform:scaleX(0.85);left:196.5px;transform-origin:0 0;">12:00 AM</span>
<span class="t" style="top:41.67px;font-size:12.5px;line-height:14px;color:#000;transform:scaleX(0.85);left:292px;transform-origin:0 0;">7 hours</span>
<span class="t" style="top:41.67px;font-size:12.5px;line-height:14px;color:#000;transform:scaleX(0.85);left:392px;transform-origin:0 0;">Full</span>
<span class="t" style="top:55.67px;font-size:12.5px;line-height:14px;color:#000;transform:scaleX(0.87);left:6px;transform-origin:0 0;">Tuesday</span>
<span class="t" style="top:55.67px;font-size:12.5px;line-height:14px;color:#000;transform:scaleX(0.85);left:101.5px;transform-origin:0 0;">12:00 AM</span>
<span class="t" style="top:55.67px;font-size:12.5px;line-height:14px;color:#000;transform:scaleX(0.85);left:196.5px;transform-origin:0 0;">8:00 AM</span>
<span class="t" style="top:55.67px;font-size:12.5px;line-height:14px;color:#000;transform:scaleX(0.85);left:292px;transform-origin:0 0;">8 hours</span>
<span class="t" style="top:55.67px;font-size:12.5px;line-height:14px;color:#000;transform:scaleX(0.85);left:392px;transform-origin:0 0;">Full</span>
<span class="t" style="top:69.67px;font-size:12.5px;line-height:14px;color:#000;transform:scaleX(0.87);left:6px;transform-origin:0 0;">Tuesday</span>
<span class="t" style="top:69.67px;font-size:12.5px;line-height:14px;color:#000;transform:scaleX(0.85);left:101.5px;transform-origin:0 0;">8:00 AM</span>
<span class="t" style="top:69.67px;font-size:12.5px;line-height:14px;color:#000;transform:scaleX(0.85);left:196.5px;transform-origin:0 0;">5:00 PM</span>
<span class="t" style="top:69.67px;font-size:12.5px;line-height:14px;color:#000;transform:scaleX(0.85);left:292px;transform-origin:0 0;">9 hours</span>
<span class="t" style="top:69.67px;font-size:12.5px;line-height:14px;color:#000;transform:scaleX(0.85);left:392px;transform-origin:0 0;">64 Kbps</span>
<span class="t" style="top:83.67px;font-size:12.5px;line-height:14px;color:#000;transform:scaleX(0.87);left:6px;transform-origin:0 0;">Tuesday</span>
<span class="t" style="top:83.67px;font-size:12.5px;line-height:14px;color:#000;transform:scaleX(0.85);left:101.5px;transform-origin:0 0;">5:00 PM</span>
<span class="t" style="top:83.67px;font-size:12.5px;line-height:14px;color:#000;transform:scaleX(0.85);left:196.5px;transform-origin:0 0;">12:00 AM</span>
<span class="t" style="top:83.67px;font-size:12.5px;line-height:14px;color:#000;transform:scaleX(0.85);left:292px;transform-origin:0 0;">7 hours</span>
<span class="t" style="top:83.67px;font-size:12.5px;line-height:14px;color:#000;transform:scaleX(0.85);left:392px;transform-origin:0 0;">Full</span>
<span class="t" style="top:97.67px;font-size:12.5px;line-height:14px;color:#000;transform:scaleX(0.87);left:6px;transform-origin:0 0;">Wednesday</span>
<span class="t" style="top:97.67px;font-size:12.5px;line-height:14px;color:#000;transform:scaleX(0.85);left:101.5px;transform-origin:0 0;">12:00 AM</span>
<span class="t" style="top:97.67px;font-size:12.5px;line-height:14px;color:#000;transform:scaleX(0.85);left:196.5px;transform-origin:0 0;">8:00 AM</span>
<span class="t" style="top:97.67px;font-size:12.5px;line-height:14px;color:#000;transform:scaleX(0.85);left:292px;transform-origin:0 0;">8 hours</span>
<span class="t" style="top:97.67px;font-size:12.5px;line-height:14px;color:#000;transform:scaleX(0.85);left:392px;transform-origin:0 0;">Full</span>
<span class="t" style="top:111.67px;font-size:12.5px;line-height:14px;color:#000;transform:scaleX(0.87);left:6px;transform-origin:0 0;">Wednesday</span>
<span class="t" style="top:111.67px;font-size:12.5px;line-height:14px;color:#000;transform:scaleX(0.85);left:101.5px;transform-origin:0 0;">8:00 AM</span>
<span class="t" style="top:111.67px;font-size:12.5px;line-height:14px;color:#000;transform:scaleX(0.85);left:196.5px;transform-origin:0 0;">5:00 PM</span>
<span class="t" style="top:111.67px;font-size:12.5px;line-height:14px;color:#000;transform:scaleX(0.85);left:292px;transform-origin:0 0;">9 hours</span>
<span class="t" style="top:111.67px;font-size:12.5px;line-height:14px;color:#000;transform:scaleX(0.85);left:392px;transform-origin:0 0;">64 Kbps</span>
<span class="t" style="top:125.67px;font-size:12.5px;line-height:14px;color:#000;transform:scaleX(0.87);left:6px;transform-origin:0 0;">Wednesday</span>
<span class="t" style="top:125.67px;font-size:12.5px;line-height:14px;color:#000;transform:scaleX(0.85);left:101.5px;transform-origin:0 0;">5:00 PM</span>
<span class="t" style="top:125.67px;font-size:12.5px;line-height:14px;color:#000;transform:scaleX(0.85);left:196.5px;transform-origin:0 0;">12:00 AM</span>
<span class="t" style="top:125.67px;font-size:12.5px;line-height:14px;color:#000;transform:scaleX(0.85);left:292px;transform-origin:0 0;">7 hours</span>
<span class="t" style="top:125.67px;font-size:12.5px;line-height:14px;color:#000;transform:scaleX(0.85);left:392px;transform-origin:0 0;">Full</span>
</div>
<div style="left:601px;top:311px;width:16px;height:153px;background:#D0D0C8;background-image:linear-gradient(45deg,#fff 25%,transparent 25%,transparent 75%,#fff 75%),linear-gradient(45deg,#fff 25%,transparent 25%,transparent 75%,#fff 75%);background-size:2px 2px;background-position:0 0,1px 1px;"></div>
<div style="left:601px;top:311px;width:16px;height:16px;background:#D0D0C8;"></div>
<div style="left:601px;top:311px;width:16px;height:1px;background:#D0D0C8;"></div>
<div style="left:601px;top:311px;width:1px;height:16px;background:#D0D0C8;"></div>
<div style="left:601px;top:326px;width:16px;height:1px;background:#404040;"></div>
<div style="left:616px;top:311px;width:1px;height:16px;background:#404040;"></div>
<div style="left:602px;top:312px;width:14px;height:1px;background:#F8FCF8;"></div>
<div style="left:602px;top:312px;width:1px;height:14px;background:#F8FCF8;"></div>
<div style="left:602px;top:325px;width:14px;height:1px;background:#808080;"></div>
<div style="left:615px;top:312px;width:1px;height:14px;background:#808080;"></div>
<div style="left:608px;top:317px;width:1px;height:1px;background:#000;"></div>
<div style="left:607px;top:318px;width:3px;height:1px;background:#000;"></div>
<div style="left:606px;top:319px;width:5px;height:1px;background:#000;"></div>
<div style="left:605px;top:320px;width:7px;height:1px;background:#000;"></div>
<div style="left:601px;top:327px;width:16px;height:62px;background:#D0D0C8;"></div>
<div style="left:601px;top:327px;width:16px;height:1px;background:#D0D0C8;"></div>
<div style="left:601px;top:327px;width:1px;height:62px;background:#D0D0C8;"></div>
<div style="left:601px;top:388px;width:16px;height:1px;background:#404040;"></div>
<div style="left:616px;top:327px;width:1px;height:62px;background:#404040;"></div>
<div style="left:602px;top:328px;width:14px;height:1px;background:#F8FCF8;"></div>
<div style="left:602px;top:328px;width:1px;height:60px;background:#F8FCF8;"></div>
<div style="left:602px;top:387px;width:14px;height:1px;background:#808080;"></div>
<div style="left:615px;top:328px;width:1px;height:60px;background:#808080;"></div>
<div style="left:601px;top:448px;width:16px;height:16px;background:#D0D0C8;"></div>
<div style="left:601px;top:448px;width:16px;height:1px;background:#D0D0C8;"></div>
<div style="left:601px;top:448px;width:1px;height:16px;background:#D0D0C8;"></div>
<div style="left:601px;top:463px;width:16px;height:1px;background:#404040;"></div>
<div style="left:616px;top:448px;width:1px;height:16px;background:#404040;"></div>
<div style="left:602px;top:449px;width:14px;height:1px;background:#F8FCF8;"></div>
<div style="left:602px;top:449px;width:1px;height:14px;background:#F8FCF8;"></div>
<div style="left:602px;top:462px;width:14px;height:1px;background:#808080;"></div>
<div style="left:615px;top:449px;width:1px;height:14px;background:#808080;"></div>
<div style="left:605px;top:454px;width:7px;height:1px;background:#000;"></div>
<div style="left:606px;top:455px;width:5px;height:1px;background:#000;"></div>
<div style="left:607px;top:456px;width:3px;height:1px;background:#000;"></div>
<div style="left:608px;top:457px;width:1px;height:1px;background:#000;"></div>
<div style="left:107px;top:472px;width:75px;height:23px;background:#D0D0C8;"></div>
<div style="left:107px;top:472px;width:75px;height:1px;background:#F8FCF8;"></div>
<div style="left:107px;top:472px;width:1px;height:23px;background:#F8FCF8;"></div>
<div style="left:107px;top:494px;width:75px;height:1px;background:#404040;"></div>
<div style="left:181px;top:472px;width:1px;height:23px;background:#404040;"></div>
<div style="left:108px;top:473px;width:73px;height:1px;background:#D0D0C8;"></div>
<div style="left:108px;top:473px;width:1px;height:21px;background:#D0D0C8;"></div>
<div style="left:108px;top:493px;width:73px;height:1px;background:#808080;"></div>
<div style="left:180px;top:473px;width:1px;height:21px;background:#808080;"></div>
<span class="t" style="top:476.67px;font-size:12.5px;line-height:14px;color:#000;transform:scaleX(0.85);left:43.5px;width:200px;text-align:center;transform-origin:50% 0;"><u>A</u>dd...</span>
<div style="left:188px;top:472px;width:75px;height:23px;background:#D0D0C8;"></div>
<div style="left:188px;top:472px;width:75px;height:1px;background:#F8FCF8;"></div>
<div style="left:188px;top:472px;width:1px;height:23px;background:#F8FCF8;"></div>
<div style="left:188px;top:494px;width:75px;height:1px;background:#404040;"></div>
<div style="left:262px;top:472px;width:1px;height:23px;background:#404040;"></div>
<div style="left:189px;top:473px;width:73px;height:1px;background:#D0D0C8;"></div>
<div style="left:189px;top:473px;width:1px;height:21px;background:#D0D0C8;"></div>
<div style="left:189px;top:493px;width:73px;height:1px;background:#808080;"></div>
<div style="left:261px;top:473px;width:1px;height:21px;background:#808080;"></div>
<span class="t" style="top:476.67px;font-size:12.5px;line-height:14px;color:#808080;transform:scaleX(0.85);left:124.5px;width:200px;text-align:center;transform-origin:50% 0;text-shadow:1px 1px 0 #F8FCF8;"><u>E</u>dit...</span>
<div style="left:269px;top:472px;width:75px;height:23px;background:#D0D0C8;"></div>
<div style="left:269px;top:472px;width:75px;height:1px;background:#F8FCF8;"></div>
<div style="left:269px;top:472px;width:1px;height:23px;background:#F8FCF8;"></div>
<div style="left:269px;top:494px;width:75px;height:1px;background:#404040;"></div>
<div style="left:343px;top:472px;width:1px;height:23px;background:#404040;"></div>
<div style="left:270px;top:473px;width:73px;height:1px;background:#D0D0C8;"></div>
<div style="left:270px;top:473px;width:1px;height:21px;background:#D0D0C8;"></div>
<div style="left:270px;top:493px;width:73px;height:1px;background:#808080;"></div>
<div style="left:342px;top:473px;width:1px;height:21px;background:#808080;"></div>
<span class="t" style="top:476.67px;font-size:12.5px;line-height:14px;color:#808080;transform:scaleX(0.85);left:205.5px;width:200px;text-align:center;transform-origin:50% 0;text-shadow:1px 1px 0 #F8FCF8;"><u>R</u>emove</span>
<div style="left:107px;top:515px;width:75px;height:23px;background:#D0D0C8;"></div>
<div style="left:107px;top:515px;width:75px;height:1px;background:#F8FCF8;"></div>
<div style="left:107px;top:515px;width:1px;height:23px;background:#F8FCF8;"></div>
<div style="left:107px;top:537px;width:75px;height:1px;background:#404040;"></div>
<div style="left:181px;top:515px;width:1px;height:23px;background:#404040;"></div>
<div style="left:108px;top:516px;width:73px;height:1px;background:#D0D0C8;"></div>
<div style="left:108px;top:516px;width:1px;height:21px;background:#D0D0C8;"></div>
<div style="left:108px;top:536px;width:73px;height:1px;background:#808080;"></div>
<div style="left:180px;top:516px;width:1px;height:21px;background:#808080;"></div>
<span class="t" style="top:519.67px;font-size:12.5px;line-height:14px;color:#000;transform:scaleX(0.85);left:43.5px;width:200px;text-align:center;transform-origin:50% 0;">&lt;&lt; <u>D</u>etails</span>
<div style="left:463px;top:515px;width:75px;height:23px;background:#000;"></div>
<div style="left:464px;top:516px;width:73px;height:21px;background:#D0D0C8;"></div>
<div style="left:464px;top:516px;width:73px;height:1px;background:#F8FCF8;"></div>
<div style="left:464px;top:516px;width:1px;height:21px;background:#F8FCF8;"></div>
<div style="left:464px;top:536px;width:73px;height:1px;background:#404040;"></div>
<div style="left:536px;top:516px;width:1px;height:21px;background:#404040;"></div>
<div style="left:465px;top:517px;width:71px;height:1px;background:#D0D0C8;"></div>
<div style="left:465px;top:517px;width:1px;height:19px;background:#D0D0C8;"></div>
<div style="left:465px;top:535px;width:71px;height:1px;background:#808080;"></div>
<div style="left:535px;top:517px;width:1px;height:19px;background:#808080;"></div>
<span class="t" style="top:519.67px;font-size:12.5px;line-height:14px;color:#000;transform:scaleX(0.85);left:399.5px;width:200px;text-align:center;transform-origin:50% 0;">OK</span>
<div style="left:544px;top:515px;width:75px;height:23px;background:#D0D0C8;"></div>
<div style="left:544px;top:515px;width:75px;height:1px;background:#F8FCF8;"></div>
<div style="left:544px;top:515px;width:1px;height:23px;background:#F8FCF8;"></div>
<div style="left:544px;top:537px;width:75px;height:1px;background:#404040;"></div>
<div style="left:618px;top:515px;width:1px;height:23px;background:#404040;"></div>
<div style="left:545px;top:516px;width:73px;height:1px;background:#D0D0C8;"></div>
<div style="left:545px;top:516px;width:1px;height:21px;background:#D0D0C8;"></div>
<div style="left:545px;top:536px;width:73px;height:1px;background:#808080;"></div>
<div style="left:617px;top:516px;width:1px;height:21px;background:#808080;"></div>
<span class="t" style="top:519.67px;font-size:12.5px;line-height:14px;color:#000;transform:scaleX(0.85);left:480.5px;width:200px;text-align:center;transform-origin:50% 0;">Cancel</span>
<svg style="left:616px;top:536px" width="13" height="13" viewBox="0 0 13 13" shape-rendering="crispEdges"></svg>
<svg style="left:0;top:0" width="721" height="577" viewBox="0 0 721 577"><g shape-rendering="crispEdges"><rect x="98.5" y="20.5" width="14" height="14" fill="none" stroke="#A8A488" stroke-width="1" stroke-dasharray="1 1"/><rect x="99" y="21" width="13" height="13" fill="#0A246A"/><rect x="99" y="21" width="4" height="3" fill="#061850"/><rect x="99" y="25" width="4" height="5" fill="#A01010"/><rect x="100" y="26" width="2" height="3" fill="#E04030"/><rect x="104" y="21" width="7" height="7" fill="#C08000"/><rect x="105" y="22" width="5" height="5" fill="#FFD040"/><rect x="105" y="22" width="2" height="2" fill="#FFF8D0"/><rect x="104" y="29" width="5" height="4" fill="#3060D0"/><rect x="105" y="30" width="3" height="2" fill="#60A0FF"/><rect x="99" y="31" width="2" height="2" fill="#061850"/><rect x="102" y="31" width="1" height="2" fill="#061850"/><rect x="110" y="29" width="1" height="4" fill="#061850"/></g><g shape-rendering="crispEdges"><rect x="196" y="83" width="1" height="1" fill="#008080"/><rect x="197" y="83" width="1" height="1" fill="#008080"/><rect x="198" y="83" width="1" height="1" fill="#008080"/><rect x="199" y="83" width="1" height="1" fill="#008080"/><rect x="200" y="83" width="1" height="1" fill="#000080"/><rect x="194" y="84" width="1" height="1" fill="#008080"/><rect x="195" y="84" width="1" height="1" fill="#008080"/><rect x="196" y="84" width="1" height="1" fill="#E0D8D0"/><rect x="198" y="84" width="1" height="1" fill="#000080"/><rect x="199" y="84" width="1" height="1" fill="#000080"/><rect x="193" y="85" width="1" height="1" fill="#008080"/><rect x="194" y="85" width="1" height="1" fill="#E0D8D0"/><rect x="195" y="85" width="1" height="1" fill="#E0D8D0"/><rect x="197" y="85" width="1" height="1" fill="#000080"/><rect x="198" y="85" width="1" height="1" fill="#000080"/><rect x="192" y="86" width="1" height="1" fill="#008080"/><rect x="193" y="86" width="1" height="1" fill="#E0D8D0"/><rect x="195" y="86" width="1" height="1" fill="#80E8E8"/><rect x="196" y="86" width="1" height="1" fill="#000080"/><rect x="197" y="86" width="1" height="1" fill="#000080"/><rect x="192" y="87" width="1" height="1" fill="#008080"/><rect x="193" y="87" width="1" height="1" fill="#E0D8D0"/><rect x="195" y="87" width="1" height="1" fill="#00F8F8"/><rect x="196" y="87" width="1" height="1" fill="#000080"/><rect x="191" y="88" width="1" height="1" fill="#008080"/><rect x="192" y="88" width="1" height="1" fill="#E0D8D0"/><rect x="194" y="88" width="1" height="1" fill="#00F8F8"/><rect x="195" y="88" width="1" height="1" fill="#00F8F8"/><rect x="196" y="88" width="1" height="1" fill="#000080"/><rect x="191" y="89" width="1" height="1" fill="#008080"/><rect x="192" y="89" width="1" height="1" fill="#E0D8D0"/><rect x="194" y="89" width="1" height="1" fill="#00F8F8"/><rect x="195" y="89" width="1" height="1" fill="#00F8F8"/><rect x="196" y="89" width="1" height="1" fill="#000080"/><rect x="191" y="90" width="1" height="1" fill="#008080"/><rect x="192" y="90" width="1" height="1" fill="#E0D8D0"/><rect x="193" y="90" width="1" height="1" fill="#00F8F8"/><rect x="194" y="90" width="1" height="1" fill="#00F8F8"/><rect x="196" y="90" width="1" height="1" fill="#000080"/><rect x="191" y="91" width="1" height="1" fill="#008080"/><rect x="192" y="91" width="1" height="1" fill="#E0D8D0"/><rect x="193" y="91" width="1" height="1" fill="#00F8F8"/><rect x="194" y="91" width="1" height="1" fill="#00F8F8"/><rect x="195" y="91" width="1" height="1" fill="#00F8F8"/><rect x="196" y="91" width="1" height="1" fill="#000080"/><rect x="191" y="92" width="1" height="1" fill="#008080"/><rect x="192" y="92" width="1" height="1" fill="#E0D8D0"/><rect x="194" y="92" width="1" height="1" fill="#00F8F8"/><rect x="195" y="92" width="1" height="1" fill="#00F8F8"/><rect x="196" y="92" width="1" height="1" fill="#000080"/><rect x="192" y="93" width="1" height="1" fill="#008080"/><rect x="193" y="93" width="1" height="1" fill="#E0D8D0"/><rect x="195" y="93" width="1" height="1" fill="#00F8F8"/><rect x="196" y="93" width="1" height="1" fill="#00F8F8"/><rect x="197" y="93" width="1" height="1" fill="#000080"/><rect x="192" y="94" width="1" height="1" fill="#008080"/><rect x="193" y="94" width="1" height="1" fill="#008080"/><rect x="194" y="94" width="1" height="1" fill="#E0D8D0"/><rect x="195" y="94" width="1" height="1" fill="#00F8F8"/><rect x="196" y="94" width="1" height="1" fill="#00F8F8"/><rect x="197" y="94" width="1" height="1" fill="#000080"/><rect x="193" y="95" width="1" height="1" fill="#000080"/><rect x="194" y="95" width="1" height="1" fill="#008080"/><rect x="195" y="95" width="1" height="1" fill="#00F8F8"/><rect x="196" y="95" width="1" height="1" fill="#00F8F8"/><rect x="197" y="95" width="1" height="1" fill="#00F8F8"/><rect x="198" y="95" width="1" height="1" fill="#000080"/><rect x="194" y="96" width="1" height="1" fill="#000080"/><rect x="195" y="96" width="1" height="1" fill="#000080"/><rect x="196" y="96" width="1" height="1" fill="#000080"/><rect x="197" y="96" width="1" height="1" fill="#00F8F8"/><rect x="198" y="96" width="1" height="1" fill="#000080"/><rect x="199" y="96" width="1" height="1" fill="#000080"/><rect x="196" y="97" width="1" height="1" fill="#000080"/><rect x="197" y="97" width="1" height="1" fill="#000080"/><rect x="198" y="97" width="1" height="1" fill="#000080"/><rect x="199" y="97" width="1" height="1" fill="#000080"/><rect x="200" y="97" width="1" height="1" fill="#000080"/></g><g shape-rendering="crispEdges"><rect x="604" y="83" width="1" height="1" fill="#008080"/><rect x="605" y="83" width="1" height="1" fill="#008080"/><rect x="606" y="83" width="1" height="1" fill="#008080"/><rect x="607" y="83" width="1" height="1" fill="#008080"/><rect x="608" y="83" width="1" height="1" fill="#000080"/><rect x="602" y="84" width="1" height="1" fill="#008080"/><rect x="603" y="84" width="1" height="1" fill="#008080"/><rect x="604" y="84" width="1" height="1" fill="#E0D8D0"/><rect x="606" y="84" width="1" height="1" fill="#000080"/><rect x="607" y="84" width="1" height="1" fill="#000080"/><rect x="601" y="85" width="1" height="1" fill="#008080"/><rect x="602" y="85" width="1" height="1" fill="#E0D8D0"/><rect x="603" y="85" width="1" height="1" fill="#E0D8D0"/><rect x="605" y="85" width="1" height="1" fill="#000080"/><rect x="606" y="85" width="1" height="1" fill="#000080"/><rect x="600" y="86" width="1" height="1" fill="#008080"/><rect x="601" y="86" width="1" height="1" fill="#E0D8D0"/><rect x="603" y="86" width="1" height="1" fill="#80E8E8"/><rect x="604" y="86" width="1" height="1" fill="#000080"/><rect x="605" y="86" width="1" height="1" fill="#000080"/><rect x="600" y="87" width="1" height="1" fill="#008080"/><rect x="601" y="87" width="1" height="1" fill="#E0D8D0"/><rect x="603" y="87" width="1" height="1" fill="#00F8F8"/><rect x="604" y="87" width="1" height="1" fill="#000080"/><rect x="599" y="88" width="1" height="1" fill="#008080"/><rect x="600" y="88" width="1" height="1" fill="#E0D8D0"/><rect x="602" y="88" width="1" height="1" fill="#00F8F8"/><rect x="603" y="88" width="1" height="1" fill="#00F8F8"/><rect x="604" y="88" width="1" height="1" fill="#000080"/><rect x="599" y="89" width="1" height="1" fill="#008080"/><rect x="600" y="89" width="1" height="1" fill="#E0D8D0"/><rect x="602" y="89" width="1" height="1" fill="#00F8F8"/><rect x="603" y="89" width="1" height="1" fill="#00F8F8"/><rect x="604" y="89" width="1" height="1" fill="#000080"/><rect x="599" y="90" width="1" height="1" fill="#008080"/><rect x="600" y="90" width="1" height="1" fill="#E0D8D0"/><rect x="601" y="90" width="1" height="1" fill="#00F8F8"/><rect x="602" y="90" width="1" height="1" fill="#00F8F8"/><rect x="604" y="90" width="1" height="1" fill="#000080"/><rect x="599" y="91" width="1" height="1" fill="#008080"/><rect x="600" y="91" width="1" height="1" fill="#E0D8D0"/><rect x="601" y="91" width="1" height="1" fill="#00F8F8"/><rect x="602" y="91" width="1" height="1" fill="#00F8F8"/><rect x="603" y="91" width="1" height="1" fill="#00F8F8"/><rect x="604" y="91" width="1" height="1" fill="#000080"/><rect x="599" y="92" width="1" height="1" fill="#008080"/><rect x="600" y="92" width="1" height="1" fill="#E0D8D0"/><rect x="602" y="92" width="1" height="1" fill="#00F8F8"/><rect x="603" y="92" width="1" height="1" fill="#00F8F8"/><rect x="604" y="92" width="1" height="1" fill="#000080"/><rect x="600" y="93" width="1" height="1" fill="#008080"/><rect x="601" y="93" width="1" height="1" fill="#E0D8D0"/><rect x="603" y="93" width="1" height="1" fill="#00F8F8"/><rect x="604" y="93" width="1" height="1" fill="#00F8F8"/><rect x="605" y="93" width="1" height="1" fill="#000080"/><rect x="600" y="94" width="1" height="1" fill="#008080"/><rect x="601" y="94" width="1" height="1" fill="#008080"/><rect x="602" y="94" width="1" height="1" fill="#E0D8D0"/><rect x="603" y="94" width="1" height="1" fill="#00F8F8"/><rect x="604" y="94" width="1" height="1" fill="#00F8F8"/><rect x="605" y="94" width="1" height="1" fill="#000080"/><rect x="601" y="95" width="1" height="1" fill="#000080"/><rect x="602" y="95" width="1" height="1" fill="#008080"/><rect x="603" y="95" width="1" height="1" fill="#00F8F8"/><rect x="604" y="95" width="1" height="1" fill="#00F8F8"/><rect x="605" y="95" width="1" height="1" fill="#00F8F8"/><rect x="606" y="95" width="1" height="1" fill="#000080"/><rect x="602" y="96" width="1" height="1" fill="#000080"/><rect x="603" y="96" width="1" height="1" fill="#000080"/><rect x="604" y="96" width="1" height="1" fill="#000080"/><rect x="605" y="96" width="1" height="1" fill="#00F8F8"/><rect x="606" y="96" width="1" height="1" fill="#000080"/><rect x="607" y="96" width="1" height="1" fill="#000080"/><rect x="604" y="97" width="1" height="1" fill="#000080"/><rect x="605" y="97" width="1" height="1" fill="#000080"/><rect x="606" y="97" width="1" height="1" fill="#000080"/><rect x="607" y="97" width="1" height="1" fill="#000080"/><rect x="608" y="97" width="1" height="1" fill="#000080"/></g><g shape-rendering="crispEdges"><rect x="396" y="82" width="2" height="1" fill="#808000"/><rect x="402" y="82" width="2" height="1" fill="#000"/><rect x="396" y="83" width="1" height="1" fill="#808000"/><rect x="397" y="83" width="1" height="1" fill="#E8E8D0"/><rect x="398" y="83" width="1" height="1" fill="#808000"/><rect x="402" y="83" width="1" height="1" fill="#F8FC00"/><rect x="403" y="83" width="1" height="1" fill="#000"/><rect x="396" y="84" width="1" height="1" fill="#808000"/><rect x="397" y="84" width="2" height="1" fill="#E8E8D0"/><rect x="399" y="84" width="3" height="1" fill="#808000"/><rect x="402" y="84" width="1" height="1" fill="#F8FC00"/><rect x="403" y="84" width="1" height="1" fill="#000"/><rect x="396" y="85" width="2" height="1" fill="#808000"/><rect x="398" y="85" width="1" height="1" fill="#E8E8D0"/><rect x="399" y="85" width="2" height="1" fill="#C0C0D0"/><rect x="401" y="85" width="2" height="1" fill="#F8FC00"/><rect x="403" y="85" width="1" height="1" fill="#000"/><rect x="392" y="86" width="5" height="1" fill="#808000"/><rect x="397" y="86" width="2" height="1" fill="#C0C0D0"/><rect x="399" y="86" width="4" height="1" fill="#F8FC00"/><rect x="403" y="86" width="1" height="1" fill="#C0C0D0"/><rect x="404" y="86" width="4" height="1" fill="#000"/><rect x="392" y="87" width="1" height="1" fill="#808000"/><rect x="393" y="87" width="3" height="1" fill="#E8E8D0"/><rect x="396" y="87" width="1" height="1" fill="#808000"/><rect x="397" y="87" width="1" height="1" fill="#C0C0D0"/><rect x="398" y="87" width="5" height="1" fill="#F8FC00"/><rect x="403" y="87" width="1" height="1" fill="#C0C0D0"/><rect x="404" y="87" width="3" height="1" fill="#F8FC00"/><rect x="407" y="87" width="1" height="1" fill="#000"/><rect x="393" y="88" width="2" height="1" fill="#808000"/><rect x="395" y="88" width="1" height="1" fill="#E8E8D0"/><rect x="396" y="88" width="1" height="1" fill="#C0C0D0"/><rect x="397" y="88" width="7" height="1" fill="#F8FC00"/><rect x="404" y="88" width="1" height="1" fill="#C0C0D0"/><rect x="405" y="88" width="1" height="1" fill="#F8FC00"/><rect x="406" y="88" width="1" height="1" fill="#000"/><rect x="394" y="89" width="1" height="1" fill="#808000"/><rect x="395" y="89" width="1" height="1" fill="#E8E8D0"/><rect x="396" y="89" width="1" height="1" fill="#C0C0D0"/><rect x="397" y="89" width="7" height="1" fill="#F8FC00"/><rect x="404" y="89" width="1" height="1" fill="#C0C0D0"/><rect x="405" y="89" width="1" height="1" fill="#000"/><rect x="394" y="90" width="1" height="1" fill="#808000"/><rect x="395" y="90" width="1" height="1" fill="#F8FC00"/><rect x="396" y="90" width="1" height="1" fill="#C0C0D0"/><rect x="397" y="90" width="7" height="1" fill="#F8FC00"/><rect x="404" y="90" width="1" height="1" fill="#C0C0D0"/><rect x="405" y="90" width="1" height="1" fill="#000"/><rect x="393" y="91" width="1" height="1" fill="#808000"/><rect x="394" y="91" width="2" height="1" fill="#F8FC00"/><rect x="396" y="91" width="1" height="1" fill="#C0C0D0"/><rect x="397" y="91" width="7" height="1" fill="#F8FC00"/><rect x="404" y="91" width="1" height="1" fill="#C0C0D0"/><rect x="405" y="91" width="1" height="1" fill="#F8FC00"/><rect x="406" y="91" width="1" height="1" fill="#000"/><rect x="392" y="92" width="1" height="1" fill="#808000"/><rect x="393" y="92" width="4" height="1" fill="#F8FC00"/><rect x="397" y="92" width="1" height="1" fill="#C0C0D0"/><rect x="398" y="92" width="5" height="1" fill="#F8FC00"/><rect x="403" y="92" width="1" height="1" fill="#C0C0D0"/><rect x="404" y="92" width="3" height="1" fill="#F8FC00"/><rect x="407" y="92" width="1" height="1" fill="#000"/><rect x="392" y="93" width="1" height="1" fill="#808000"/><rect x="393" y="93" width="4" height="1" fill="#000"/><rect x="397" y="93" width="1" height="1" fill="#F8FC00"/><rect x="398" y="93" width="5" height="1" fill="#C0C0D0"/><rect x="403" y="93" width="1" height="1" fill="#F8FC00"/><rect x="404" y="93" width="4" height="1" fill="#000"/><rect x="396" y="94" width="1" height="1" fill="#808000"/><rect x="397" y="94" width="3" height="1" fill="#F8FC00"/><rect x="400" y="94" width="1" height="1" fill="#000"/><rect x="401" y="94" width="2" height="1" fill="#F8FC00"/><rect x="403" y="94" width="1" height="1" fill="#000"/><rect x="396" y="95" width="1" height="1" fill="#808000"/><rect x="397" y="95" width="2" height="1" fill="#F8FC00"/><rect x="399" y="95" width="1" height="1" fill="#000"/><rect x="401" y="95" width="1" height="1" fill="#000"/><rect x="402" y="95" width="1" height="1" fill="#F8FC00"/><rect x="403" y="95" width="1" height="1" fill="#000"/><rect x="396" y="96" width="1" height="1" fill="#808000"/><rect x="397" y="96" width="1" height="1" fill="#F8FC00"/><rect x="398" y="96" width="1" height="1" fill="#000"/><rect x="401" y="96" width="1" height="1" fill="#000"/><rect x="402" y="96" width="1" height="1" fill="#F8FC00"/><rect x="403" y="96" width="1" height="1" fill="#000"/><rect x="396" y="97" width="2" height="1" fill="#000"/><rect x="402" y="97" width="2" height="1" fill="#000"/></g><g shape-rendering="crispEdges"><rect x="628" y="535" width="1" height="1" fill="#F8FCF8"/><rect x="627" y="536" width="1" height="1" fill="#F8FCF8"/><rect x="628" y="536" width="1" height="1" fill="#808080"/><rect x="626" y="537" width="1" height="1" fill="#F8FCF8"/><rect x="627" y="537" width="1" height="1" fill="#808080"/><rect x="628" y="537" width="1" height="1" fill="#808080"/><rect x="625" y="538" width="1" height="1" fill="#F8FCF8"/><rect x="626" y="538" width="1" height="1" fill="#808080"/><rect x="627" y="538" width="1" height="1" fill="#808080"/><rect x="624" y="539" width="1" height="1" fill="#F8FCF8"/><rect x="625" y="539" width="1" height="1" fill="#808080"/><rect x="626" y="539" width="1" height="1" fill="#808080"/><rect x="628" y="539" width="1" height="1" fill="#F8FCF8"/><rect x="623" y="540" width="1" height="1" fill="#F8FCF8"/><rect x="624" y="540" width="1" height="1" fill="#808080"/><rect x="625" y="540" width="1" height="1" fill="#808080"/><rect x="627" y="540" width="1" height="1" fill="#F8FCF8"/><rect x="628" y="540" width="1" height="1" fill="#808080"/><rect x="622" y="541" width="1" height="1" fill="#F8FCF8"/><rect x="623" y="541" width="1" height="1" fill="#808080"/><rect x="624" y="541" width="1" height="1" fill="#808080"/><rect x="626" y="541" width="1" height="1" fill="#F8FCF8"/><rect x="627" y="541" width="1" height="1" fill="#808080"/><rect x="628" y="541" width="1" height="1" fill="#808080"/><rect x="621" y="542" width="1" height="1" fill="#F8FCF8"/><rect x="622" y="542" width="1" height="1" fill="#808080"/><rect x="623" y="542" width="1" height="1" fill="#808080"/><rect x="625" y="542" width="1" height="1" fill="#F8FCF8"/><rect x="626" y="542" width="1" height="1" fill="#808080"/><rect x="627" y="542" width="1" height="1" fill="#808080"/><rect x="620" y="543" width="1" height="1" fill="#F8FCF8"/><rect x="621" y="543" width="1" height="1" fill="#808080"/><rect x="622" y="543" width="1" height="1" fill="#808080"/><rect x="624" y="543" width="1" height="1" fill="#F8FCF8"/><rect x="625" y="543" width="1" height="1" fill="#808080"/><rect x="626" y="543" width="1" height="1" fill="#808080"/><rect x="628" y="543" width="1" height="1" fill="#F8FCF8"/><rect x="619" y="544" width="1" height="1" fill="#F8FCF8"/><rect x="620" y="544" width="1" height="1" fill="#808080"/><rect x="621" y="544" width="1" height="1" fill="#808080"/><rect x="623" y="544" width="1" height="1" fill="#F8FCF8"/><rect x="624" y="544" width="1" height="1" fill="#808080"/><rect x="625" y="544" width="1" height="1" fill="#808080"/><rect x="627" y="544" width="1" height="1" fill="#F8FCF8"/><rect x="628" y="544" width="1" height="1" fill="#808080"/><rect x="618" y="545" width="1" height="1" fill="#F8FCF8"/><rect x="619" y="545" width="1" height="1" fill="#808080"/><rect x="620" y="545" width="1" height="1" fill="#808080"/><rect x="622" y="545" width="1" height="1" fill="#F8FCF8"/><rect x="623" y="545" width="1" height="1" fill="#808080"/><rect x="624" y="545" width="1" height="1" fill="#808080"/><rect x="626" y="545" width="1" height="1" fill="#F8FCF8"/><rect x="627" y="545" width="1" height="1" fill="#808080"/><rect x="628" y="545" width="1" height="1" fill="#808080"/><rect x="617" y="546" width="1" height="1" fill="#F8FCF8"/><rect x="618" y="546" width="1" height="1" fill="#808080"/><rect x="619" y="546" width="1" height="1" fill="#808080"/><rect x="621" y="546" width="1" height="1" fill="#F8FCF8"/><rect x="622" y="546" width="1" height="1" fill="#808080"/><rect x="623" y="546" width="1" height="1" fill="#808080"/><rect x="625" y="546" width="1" height="1" fill="#F8FCF8"/><rect x="626" y="546" width="1" height="1" fill="#808080"/><rect x="627" y="546" width="1" height="1" fill="#808080"/><rect x="616" y="547" width="1" height="1" fill="#F8FCF8"/><rect x="617" y="547" width="1" height="1" fill="#808080"/><rect x="618" y="547" width="1" height="1" fill="#808080"/><rect x="620" y="547" width="1" height="1" fill="#F8FCF8"/><rect x="621" y="547" width="1" height="1" fill="#808080"/><rect x="622" y="547" width="1" height="1" fill="#808080"/><rect x="624" y="547" width="1" height="1" fill="#F8FCF8"/><rect x="625" y="547" width="1" height="1" fill="#808080"/><rect x="626" y="547" width="1" height="1" fill="#808080"/><rect x="615" y="548" width="1" height="1" fill="#F8FCF8"/><rect x="616" y="548" width="1" height="1" fill="#808080"/><rect x="617" y="548" width="1" height="1" fill="#808080"/><rect x="619" y="548" width="1" height="1" fill="#F8FCF8"/><rect x="620" y="548" width="1" height="1" fill="#808080"/><rect x="621" y="548" width="1" height="1" fill="#808080"/><rect x="623" y="548" width="1" height="1" fill="#F8FCF8"/><rect x="624" y="548" width="1" height="1" fill="#808080"/><rect x="625" y="548" width="1" height="1" fill="#808080"/></g></svg>
<div style="left:205px;top:272px;width:140px;height:106px;background:#000;"></div>
<div style="left:206px;top:273px;width:138px;height:104px;background:#F8FCF8;"></div>
<span class="t" style="top:272.67px;font-size:12.5px;line-height:14px;color:#000;transform:scaleX(0.85);left:208px;transform-origin:0 0;">Full</span>
<span class="t" style="top:285.67px;font-size:12.5px;line-height:14px;color:#000;transform:scaleX(0.85);left:208px;transform-origin:0 0;">No replication</span>
<span class="t" style="top:298.67px;font-size:12.5px;line-height:14px;color:#000;transform:scaleX(0.85);left:208px;transform-origin:0 0;">16 Kbps</span>
<span class="t" style="top:311.67px;font-size:12.5px;line-height:14px;color:#000;transform:scaleX(0.85);left:208px;transform-origin:0 0;">64 Kbps</span>
<span class="t" style="top:324.67px;font-size:12.5px;line-height:14px;color:#000;transform:scaleX(0.85);left:208px;transform-origin:0 0;">128 Kbps</span>
<span class="t" style="top:337.67px;font-size:12.5px;line-height:14px;color:#000;transform:scaleX(0.85);left:208px;transform-origin:0 0;">256 Kbps</span>
<span class="t" style="top:350.67px;font-size:12.5px;line-height:14px;color:#000;transform:scaleX(0.85);left:208px;transform-origin:0 0;">512 Kbps</span>
<span class="t" style="top:363.67px;font-size:12.5px;line-height:14px;color:#000;transform:scaleX(0.85);left:208px;transform-origin:0 0;">1 Mbps</span>
<div style="left:328px;top:273px;width:16px;height:104px;background:#D0D0C8;background-image:linear-gradient(45deg,#fff 25%,transparent 25%,transparent 75%,#fff 75%),linear-gradient(45deg,#fff 25%,transparent 25%,transparent 75%,#fff 75%);background-size:2px 2px;background-position:0 0,1px 1px;"></div>
<div style="left:328px;top:273px;width:16px;height:16px;background:#D0D0C8;"></div>
<div style="left:328px;top:273px;width:16px;height:1px;background:#D0D0C8;"></div>
<div style="left:328px;top:273px;width:1px;height:16px;background:#D0D0C8;"></div>
<div style="left:328px;top:288px;width:16px;height:1px;background:#404040;"></div>
<div style="left:343px;top:273px;width:1px;height:16px;background:#404040;"></div>
<div style="left:329px;top:274px;width:14px;height:1px;background:#F8FCF8;"></div>
<div style="left:329px;top:274px;width:1px;height:14px;background:#F8FCF8;"></div>
<div style="left:329px;top:287px;width:14px;height:1px;background:#808080;"></div>
<div style="left:342px;top:274px;width:1px;height:14px;background:#808080;"></div>
<div style="left:335px;top:279px;width:1px;height:1px;background:#000;"></div>
<div style="left:334px;top:280px;width:3px;height:1px;background:#000;"></div>
<div style="left:333px;top:281px;width:5px;height:1px;background:#000;"></div>
<div style="left:332px;top:282px;width:7px;height:1px;background:#000;"></div>
<div style="left:328px;top:289px;width:16px;height:36px;background:#D0D0C8;"></div>
<div style="left:328px;top:289px;width:16px;height:1px;background:#D0D0C8;"></div>
<div style="left:328px;top:289px;width:1px;height:36px;background:#D0D0C8;"></div>
<div style="left:328px;top:324px;width:16px;height:1px;background:#404040;"></div>
<div style="left:343px;top:289px;width:1px;height:36px;background:#404040;"></div>
<div style="left:329px;top:290px;width:14px;height:1px;background:#F8FCF8;"></div>
<div style="left:329px;top:290px;width:1px;height:34px;background:#F8FCF8;"></div>
<div style="left:329px;top:323px;width:14px;height:1px;background:#808080;"></div>
<div style="left:342px;top:290px;width:1px;height:34px;background:#808080;"></div>
<div style="left:328px;top:361px;width:16px;height:16px;background:#D0D0C8;"></div>
<div style="left:328px;top:361px;width:16px;height:1px;background:#D0D0C8;"></div>
<div style="left:328px;top:361px;width:1px;height:16px;background:#D0D0C8;"></div>
<div style="left:328px;top:376px;width:16px;height:1px;background:#404040;"></div>
<div style="left:343px;top:361px;width:1px;height:16px;background:#404040;"></div>
<div style="left:329px;top:362px;width:14px;height:1px;background:#F8FCF8;"></div>
<div style="left:329px;top:362px;width:1px;height:14px;background:#F8FCF8;"></div>
<div style="left:329px;top:375px;width:14px;height:1px;background:#808080;"></div>
<div style="left:342px;top:362px;width:1px;height:14px;background:#808080;"></div>
<div style="left:332px;top:367px;width:7px;height:1px;background:#000;"></div>
<div style="left:333px;top:368px;width:5px;height:1px;background:#000;"></div>
<div style="left:334px;top:369px;width:3px;height:1px;background:#000;"></div>
<div style="left:335px;top:370px;width:1px;height:1px;background:#000;"></div>
</div></body></html>
